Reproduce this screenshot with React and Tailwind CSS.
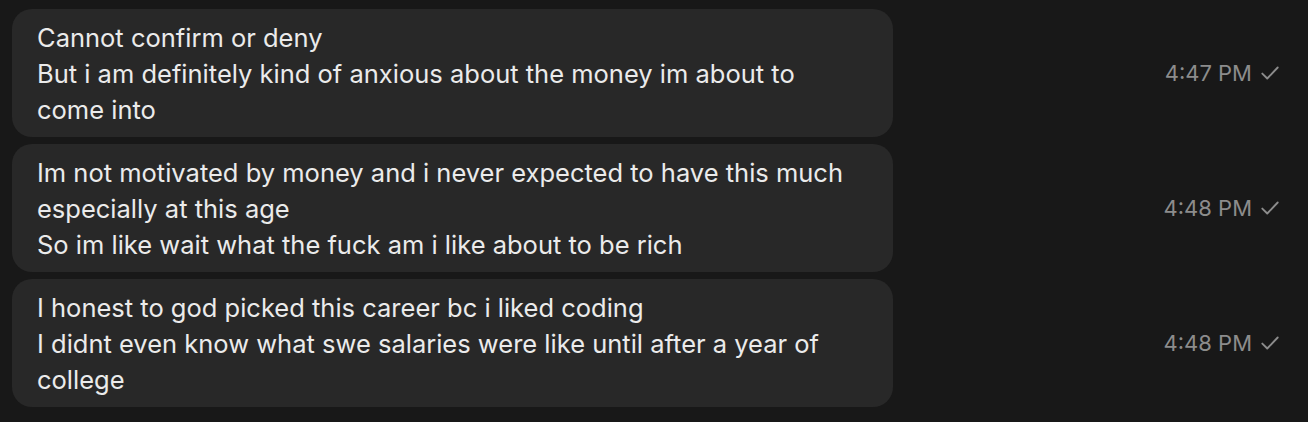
export default function App() {
  const msgs = [
    {
      lines: ["Cannot confirm or deny", "But i am definitely kind of anxious about the money im about to come into"],
      time: "4:47 PM",
    },
    {
      lines: ["Im not motivated by money and i never expected to have this much especially at this age", "So im like wait what the fuck am i like about to be rich"],
      time: "4:48 PM",
    },
    {
      lines: ["I honest to god picked this career bc i liked coding", "I didnt even know what swe salaries were like until after a year of college"],
      time: "4:48 PM",
    },
  ];
  return (
    <div className="w-[1308px] h-[422px] bg-[#181818] pt-[9px] pl-[12px] pr-[27px] flex flex-col gap-[7px]" style={{ fontFamily: "Inter, 'Noto Sans', sans-serif" }}>
      {msgs.map((m, i) => (
        <div key={i} className="flex items-center justify-between">
          <div className="w-[881px] bg-[#282828] rounded-[20px] pl-[25px] pr-[25px] pt-[11px] pb-[9px] text-[#ebebeb] text-[25.5px] leading-[36px]">
            {m.lines.map((l, j) => (
              <div key={j}>{l}</div>
            ))}
          </div>
          <div className="flex items-center gap-[7px] text-[#8c8c8c] text-[22px]">
            <span>{m.time}</span>
            <svg width="22" height="22" viewBox="0 0 20 20" fill="none" stroke="#8c8c8c" strokeWidth="1.7" strokeLinecap="round" strokeLinejoin="round">
              <path d="M3 10.5l4.5 4.5L17 5" />
            </svg>
          </div>
        </div>
      ))}
    </div>
  );
}
